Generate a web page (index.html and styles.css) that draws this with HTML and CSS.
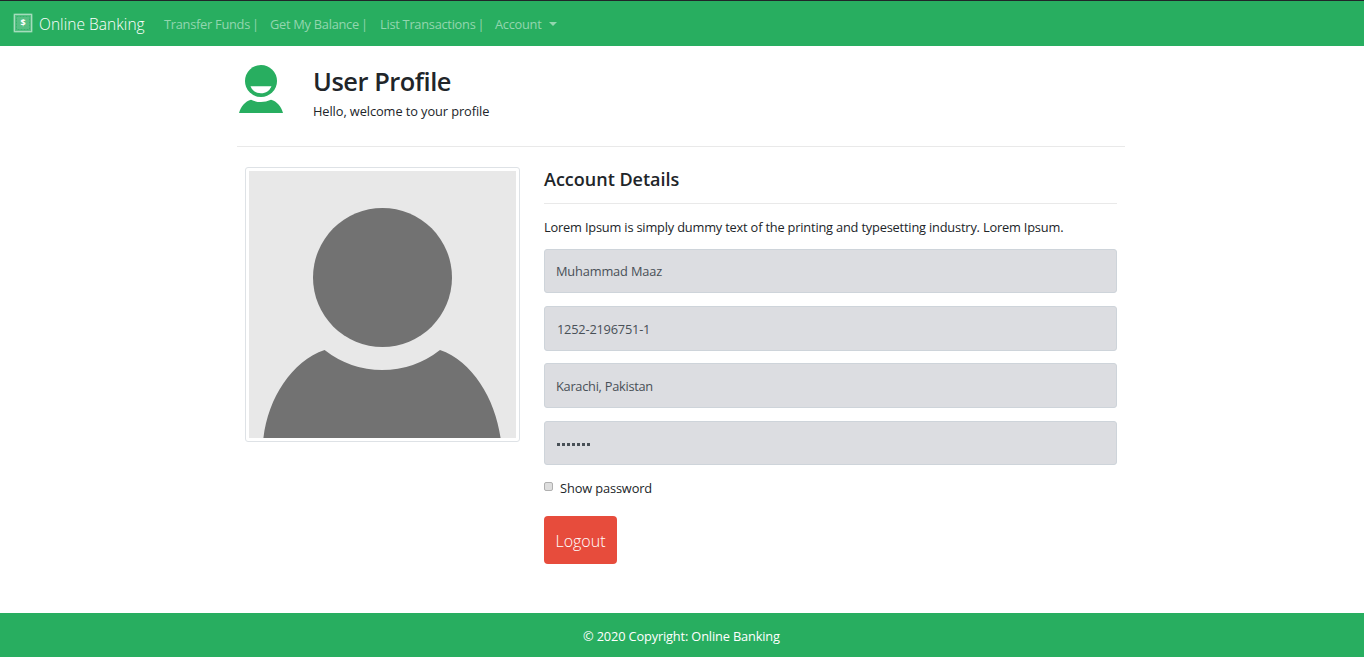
FILE: index.html
```html
<!DOCTYPE html>
<html lang="en">
<head>
<meta charset="utf-8">
<title>Online Banking</title>
<link rel="stylesheet" href="styles.css">
</head>
<body>
<nav class="navbar">
  <svg class="brand-icon" viewBox="0 0 20 20">
    <rect width="20" height="20" rx="2" fill="#fff" opacity=".22"/>
    <rect x="1.5" y="1.5" width="17" height="17" fill="none" stroke="#a5ddbc"/>
    <rect x="3.5" y="3.5" width="13" height="13" fill="none" stroke="#35b36a" stroke-dasharray="2 1"/>
    <text class="brand-dollar" x="10" y="13.3" text-anchor="middle">$</text>
  </svg>
  <span class="brand">Online Banking</span>
  <span class="nav-link transfer">Transfer Funds<span class="pipe"> |</span></span>
  <span class="nav-link balance">Get My Balance<span class="pipe"> |</span></span>
  <span class="nav-link list">List Transactions<span class="pipe"> |</span></span>
  <span class="nav-link account">Account</span>
  <span class="caret"></span>
</nav>
<main class="container">
  <header class="profile-head">
    <svg class="user-icon" viewBox="0 0 44 48">
      <circle cx="22" cy="16" r="16"/>
      <path d="M0 48C2 41 6 36.500 12 34.700Q22 39.500 32 34.700C38 36.500 42 41 44 48Z"/>
      <path class="smile" d="M11.500 21.200H32.500C30.500 25.800 27 28.200 22 28.200S13.500 25.800 11.500 21.200Z"/>
    </svg>
    <div class="titles">
      <h1>User Profile</h1>
      <p class="hello">Hello, welcome to your profile</p>
    </div>
  </header>
  <div class="columns">
    <div class="thumbnail">
      <svg viewBox="0 0 267 267">
        <rect width="267" height="267" fill="#e8e8e8"/>
        <circle cx="133.500" cy="106.500" r="69.500" fill="#727272"/>
        <path d="M14.400 267C19 227 43 190 75.600 179A93 93 0 0 0 191 179C223 190 246 227 251.600 267Z" fill="#727272"/>
      </svg>
    </div>
    <section class="details">
      <h2>Account Details</h2>
      <p class="intro">Lorem Ipsum is simply dummy text of the printing and typesetting industry. Lorem Ipsum.</p>
      <div class="fields">
        <div class="field name">Muhammad Maaz</div>
        <div class="field number">1252-2196751-1</div>
        <div class="field city">Karachi, Pakistan</div>
        <div class="field dots"><i></i><i></i><i></i><i></i><i></i><i></i><i></i></div>
      </div>
      <label class="check"><span class="box"></span><span class="show">Show password</span></label>
      <button class="logout">Logout</button>
    </section>
  </div>
</main>
<footer class="footer">© 2020 Copyright: Online Banking</footer>
</body>
</html>
```
FILE: styles.css
```css
* { box-sizing: border-box; }
body { margin: 0; height: 657px; display: flex; flex-direction: column; overflow: hidden; background: #fff; color: #212529; font: 12.8px/20px "Open Sans", "Noto Sans", sans-serif; white-space: nowrap; }
h1, h2, p { margin: 0; }
.navbar { display: flex; align-items: center; height: 46px; flex: none; border-top: 1px solid #212529; background: #28ae60; padding-left: 13px; }
.brand-icon { width: 20px; height: 20px; margin-bottom: 2px; }
.brand-dollar { font: bold 9px "Open Sans", sans-serif; fill: #fff; }
.brand { width: 125px; padding-left: 6px; color: #fff; font-size: 15.5px; font-weight: 300; letter-spacing: .05px; }
.nav-link { padding-left: 6px; color: #93d6af; letter-spacing: -.26px; }
.pipe { margin-left: -1px; }
.transfer { width: 106px; }
.balance { width: 110px; }
.list { width: 115px; }
.account { width: 60px; }
.caret { border: 4px solid transparent; border-top-color: #93d6af; border-bottom: 0; }
.container { width: 888px; margin-left: 237px; flex: 1; }
.profile-head { display: flex; height: 101px; padding: 19px 0 0 2px; border-bottom: 1px solid #e9e9e9; }
.user-icon { width: 44px; height: 48px; fill: #28ae60; }
.user-icon .smile { fill: #fff; }
.titles { margin-left: 30px; }
h1 { margin-bottom: 3px; font-size: 25.4px; font-weight: 600; line-height: 33px; letter-spacing: -.45px; }
.hello { letter-spacing: -.08px; }
.columns { display: flex; gap: 24px; padding: 20px 8px 0; }
.thumbnail { width: 275px; height: 275px; padding: 3px; border: 1px solid #dee2e6; border-radius: 3px; }
.thumbnail svg { display: block; width: 267px; height: 267px; }
.details { width: 573px; }
h2 { height: 37px; border-bottom: 1px solid #e9e9e9; font-size: 18px; font-weight: 600; line-height: 25px; }
.intro { padding-top: 13px; height: 45px; letter-spacing: -.18px; }
.fields { display: grid; grid-template-rows: 44px 45px 45px 44px; row-gap: 12.67px; }
.field { display: flex; align-items: center; padding-left: 11px; border: 1px solid #ced4da; border-radius: 3px; background: #dcdde1; color: #495057; }
.name { letter-spacing: -.15px; }
.number { padding: 2px 0 0 12px; letter-spacing: -.2px; }
.city { letter-spacing: -.27px; }
.dots { gap: 2px; padding: 3px 0 0 12px; }
.dots i { width: 3px; height: 3px; background: #495057; }
.check { display: flex; height: 51px; padding-top: 13px; }
.box { width: 9px; height: 9px; margin: 4px 7px 0 0; border: 1px solid #b0b0b0; border-radius: 2px; background: #dedede; }
.show { letter-spacing: -.12px; }
.logout { display: block; width: 73px; height: 48px; padding: 2px 0 0; border: 0; border-radius: 4px; background: #e74c3c; color: #fff; font: 300 16px "Open Sans", sans-serif; }
.footer { height: 44px; flex: none; background: #28ae60; color: #fff; padding: 13px 0 0 583px; letter-spacing: -.15px; }
```
